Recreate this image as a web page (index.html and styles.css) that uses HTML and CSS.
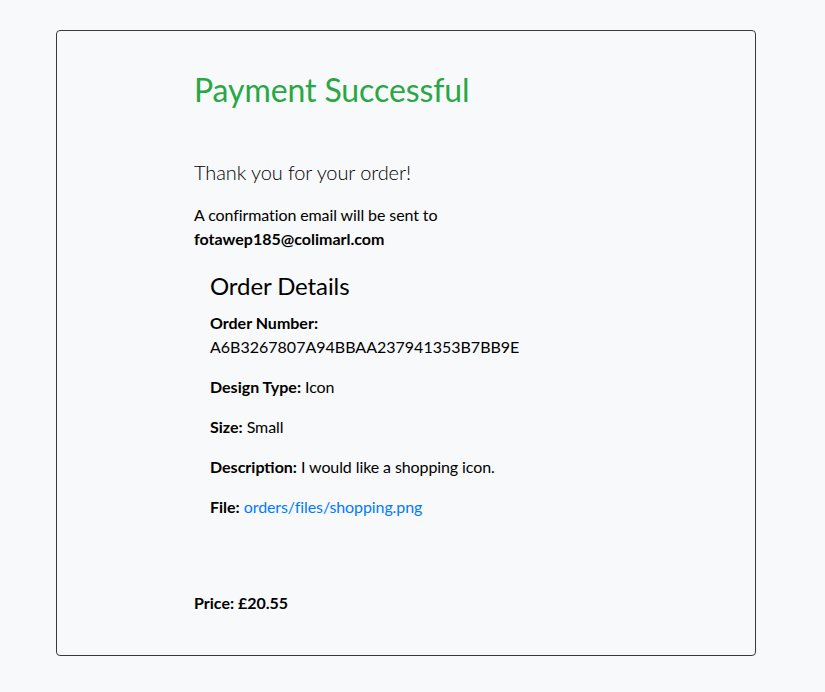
FILE: index.html
```html
<!DOCTYPE html>
<html lang="en">
<head>
<meta charset="utf-8">
<title>Payment Successful</title>
<link rel="stylesheet" href="styles.css">
</head>
<body>
<main class="card">
  <div class="content">
    <h2 class="title">Payment Successful</h2>
    <p class="lead">Thank you for your order!</p>
    <p class="confirm">A confirmation email will be sent to <strong>fotawep185@colimarl.com</strong></p>
    <section class="details">
      <h4 class="details-title">Order Details</h4>
      <p><strong>Order Number:</strong> <span class="code">A6B3267807A94BBAA237941353B7BB9E</span></p>
      <p><strong>Design Type:</strong> Icon</p>
      <p><strong>Size:</strong> Small</p>
      <p><strong>Description:</strong> I would like a shopping icon.</p>
      <p><strong>File:</strong> <a href="#" class="file-link">orders/files/shopping.png</a></p>
    </section>
    <p class="price"><strong>Price: £20.55</strong></p>
  </div>
</main>
</body>
</html>
```

FILE: styles.css
```css
html, body {
  margin: 0;
  padding: 0;
}
body {
  background: #f8f9fa;
  font-family: Lato, "Liberation Sans", sans-serif;
  font-size: 16px;
  line-height: 24px;
  color: #000;
  letter-spacing: -0.1px;
}
.card {
  box-sizing: border-box;
  width: 700px;
  height: 626px;
  margin: 30px 0 0 56px;
  border: 1px solid #343a40;
  border-radius: 4px;
  padding: 39px 0 0 137px;
}
.content {
  width: 420px;
  display: flex;
  flex-direction: column;
}
.title {
  margin: 1px 0 48px;
  font-size: 32px;
  line-height: 1.2;
  font-weight: 400;
  color: #28a745;
}
.lead {
  margin: 0 0 16px;
  font-size: 20px;
  line-height: 30px;
  font-weight: 300;
}
.confirm {
  margin: 0 0 21px;
}
.details {
  display: flex;
  flex-direction: column;
  padding-left: 16px;
}
.details-title {
  margin: 0 0 10px;
  font-size: 24px;
  line-height: 1.2;
  font-weight: 400;
}
.details p {
  margin: 0 0 16px;
}
.code {
  letter-spacing: 0;
}
.file-link {
  color: #007bff;
  text-decoration: none;
}
.price {
  margin: 56px 0 0;
}
strong {
  font-weight: 700;
  letter-spacing: 0;
}
```
